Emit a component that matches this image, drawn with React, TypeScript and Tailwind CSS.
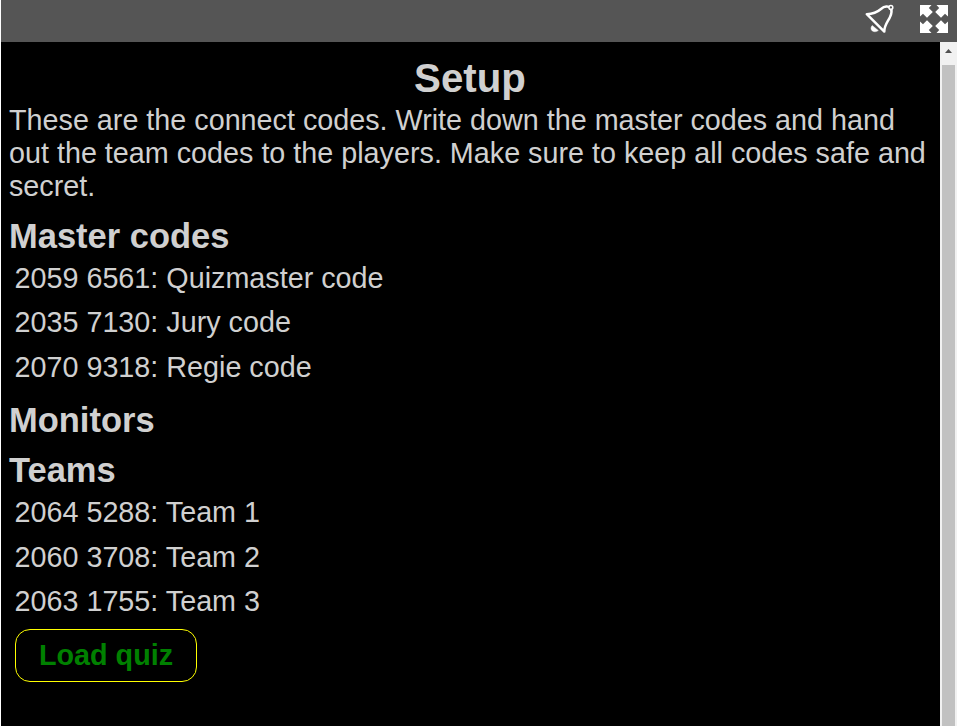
const masterCodes = [
  { code: "2059 6561", name: "Quizmaster code" },
  { code: "2035 7130", name: "Jury code" },
  { code: "2070 9318", name: "Regie code" },
];

const teams = [
  { code: "2064 5288", name: "Team 1" },
  { code: "2060 3708", name: "Team 2" },
  { code: "2063 1755", name: "Team 3" },
];

function BellIcon() {
  return (
    <svg className="h-8 w-8" viewBox="0 0 32 32" fill="none">
      <path
        d="M2.800 10.200C9 10 13.500 8 17 5C20.500 2 24.500 1.800 26.400 4.200C28.300 6.500 27.500 10 25.800 13.500C23.500 18 20 22 20.300 27.600Z"
        stroke="white"
        strokeWidth="2.500"
        strokeLinejoin="round"
      />
      <circle cx="26.900" cy="3.400" r="1.900" fill="#555555" stroke="white" strokeWidth="1.500" />
      <path d="M8.200 21.500C6.200 23.800 7 26.400 9 27.300C10.600 28 12.800 27.700 14.300 26.500Z" fill="white" stroke="white" strokeWidth="0.500" />
    </svg>
  );
}

function ExpandIcon() {
  return (
    <svg className="h-7 w-7" viewBox="0 0 28 28" fill="white">
      <path d="M0 0H11.500L8.800 3L12.800 7L7 12.800L3 8.800L0 11.500Z" />
      <path d="M28 0H16.500L19.200 3L15.200 7L21 12.800L25 8.800L28 11.500Z" />
      <path d="M0 28H11.500L8.800 25L12.800 21L7 15.200L3 19.200L0 16.500Z" />
      <path d="M28 28H16.500L19.200 25L15.200 21L21 15.200L25 19.200L28 16.500Z" />
    </svg>
  );
}

function CodeList({ items }: { items: { code: string; name: string }[] }) {
  return (
    <ul className="pl-[5.500px]">
      {items.map((item) => (
        <li key={item.code} className="leading-[44.500px]">
          {item.code}: {item.name}
        </li>
      ))}
    </ul>
  );
}

function Heading({ children }: { children: string }) {
  return <h2 className="text-[34.490px] leading-10 font-bold">{children}</h2>;
}

export default function App() {
  return (
    <div className="flex h-screen flex-col overflow-hidden bg-white pr-px pl-px font-['Liberation_Sans',Arial,sans-serif] text-[28.740px] text-[#d0d0d0]">
      <header className="flex h-[42px] shrink-0 items-start justify-end bg-[#555555] pr-[9px]">
        <div className="mt-1 mr-[24px]">
          <BellIcon />
        </div>
        <div className="mt-[5px]">
          <ExpandIcon />
        </div>
      </header>
      <div className="flex min-h-0 flex-1">
        <main className="min-w-0 flex-1 bg-black pt-[14px] pr-[9px] pl-2">
          <h1 className="text-center text-[40.240px] leading-[46px] font-bold">Setup</h1>
          <p className="mt-[2px] leading-[33px]">
            These are the connect codes. Write down the master codes and hand out the team codes to
            the players. Make sure to keep all codes safe and secret.
          </p>
          <section className="mt-[12.500px]">
            <Heading>Master codes</Heading>
            <CodeList items={masterCodes} />
          </section>
          <section className="mt-[11px]">
            <Heading>Monitors</Heading>
          </section>
          <section className="mt-2.5">
            <Heading>Teams</Heading>
            <CodeList items={teams} />
          </section>
          <button className="mt-[5.500px] ml-[6px] h-[53px] w-[182px] rounded-[15px] border border-[#ffff00] pb-px text-center leading-[50px] font-bold text-[#008000]">
            Load quiz
          </button>
        </main>
        <div className="flex w-[17px] shrink-0 flex-col bg-[#f1f1f1] pr-[2px] pl-[2px]">
          <div className="flex h-[23px] items-start justify-center pt-[7px]">
            <svg className="h-1 w-[7px]" viewBox="0 0 7 4" fill="#505050">
              <path d="M0 4L3.500 0L7 4Z" />
            </svg>
          </div>
          <div className="flex-1 bg-[#c1c1c1]" />
        </div>
      </div>
    </div>
  );
}
